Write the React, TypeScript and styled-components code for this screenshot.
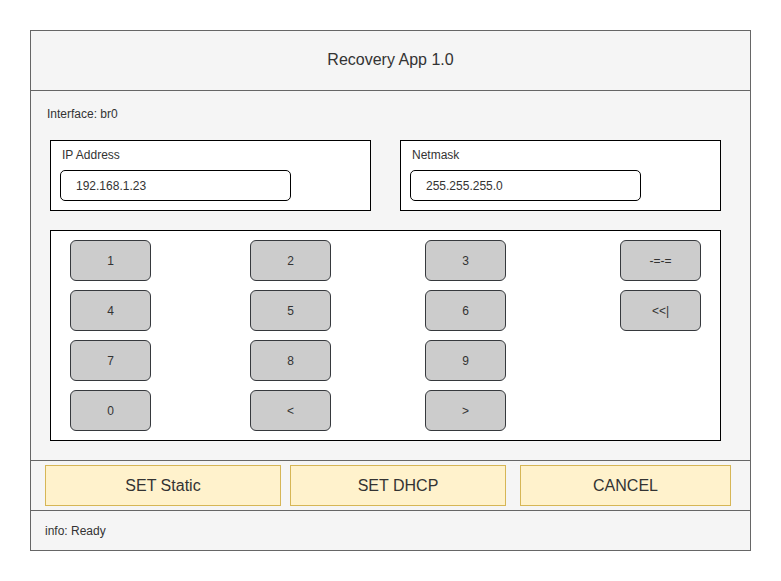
import React from "react";
import styled, { createGlobalStyle } from "styled-components";

const Global = createGlobalStyle`
  html, body { margin: 0; padding: 0; background: #ffffff; }
  body { font-family: "Liberation Sans", Arial, sans-serif; color: #333333; }
  * { box-sizing: border-box; }
`;

const Page = styled.div`
  padding: 30px 0 0 30px;
`;

const Frame = styled.div`
  width: 721px;
  height: 521px;
  border: 1px solid #666666;
  background: #f5f5f5;
  display: flex;
  flex-direction: column;
`;

const Header = styled.div`
  height: 60px;
  border-bottom: 1px solid #666666;
  display: flex;
  align-items: center;
  justify-content: center;
  font-size: 16px;
  color: #333333;
  padding-bottom: 1px;
`;

const Body = styled.div`
  height: 370px;
  border-bottom: 1px solid #666666;
  display: flex;
  flex-direction: column;
  padding: 16px 0 0 0;
`;

const InterfaceLabel = styled.div`
  font-size: 12px;
  line-height: 14px;
  height: 14px;
  margin-left: 16px;
  color: #333333;
`;

const FieldsRow = styled.div`
  display: flex;
  gap: 29px;
  margin: 19px 0 0 19px;
`;

const FieldBox = styled.div`
  width: 321px;
  height: 71px;
  border: 1px solid #000000;
  background: #ffffff;
  display: flex;
  flex-direction: column;
  padding: 7px 0 0 9px;
`;

const FieldLabel = styled.div`
  font-size: 12px;
  line-height: 14px;
  margin-left: 2px;
  color: #333333;
`;

const FieldInput = styled.div`
  width: 231px;
  height: 31px;
  margin-top: 8px;
  border: 1px solid #000000;
  border-radius: 5px;
  background: #ffffff;
  display: flex;
  align-items: center;
  padding-left: 15px;
  font-size: 12px;
  color: #333333;
`;

const Keypad = styled.div`
  width: 671px;
  height: 211px;
  margin: 19px 0 0 19px;
  border: 1px solid #000000;
  background: #ffffff;
  padding: 9px 0 0 19px;
  display: grid;
  grid-template-columns: 180px 175px 195px 81px;
  grid-auto-rows: 41px;
  row-gap: 9px;
`;

const Key = styled.div<{ $col: number; $row: number }>`
  grid-column: ${(p) => p.$col};
  grid-row: ${(p) => p.$row};
  width: 81px;
  height: 41px;
  border: 1px solid #36393d;
  border-radius: 6px;
  background: #cccccc;
  display: flex;
  align-items: center;
  justify-content: center;
  font-size: 12px;
  color: #333333;
`;

const ActionBar = styled.div`
  height: 50px;
  border-bottom: 1px solid #666666;
  display: flex;
  align-items: flex-start;
  padding: 4px 0 0 14px;
`;

const ActionButton = styled.div<{ $w: number; $ml: number }>`
  width: ${(p) => p.$w}px;
  margin-left: ${(p) => p.$ml}px;
  height: 41px;
  border: 1px solid #d6b656;
  background: #fff2cc;
  display: flex;
  align-items: center;
  justify-content: center;
  font-size: 16px;
  color: #333333;
`;

const Footer = styled.div`
  flex: 1;
  display: flex;
  align-items: center;
  padding-left: 14px;
  font-size: 12px;
  color: #333333;
`;

const keys: { label: string; col: number; row: number }[] = [
  { label: "1", col: 1, row: 1 },
  { label: "2", col: 2, row: 1 },
  { label: "3", col: 3, row: 1 },
  { label: "-=-=", col: 4, row: 1 },
  { label: "4", col: 1, row: 2 },
  { label: "5", col: 2, row: 2 },
  { label: "6", col: 3, row: 2 },
  { label: "<<|", col: 4, row: 2 },
  { label: "7", col: 1, row: 3 },
  { label: "8", col: 2, row: 3 },
  { label: "9", col: 3, row: 3 },
  { label: "0", col: 1, row: 4 },
  { label: "<", col: 2, row: 4 },
  { label: ">", col: 3, row: 4 },
];

export default function App() {
  return (
    <>
      <Global />
      <Page>
        <Frame>
          <Header>Recovery App 1.0</Header>
          <Body>
            <InterfaceLabel>Interface: br0</InterfaceLabel>
            <FieldsRow>
              <FieldBox>
                <FieldLabel>IP Address</FieldLabel>
                <FieldInput>192.168.1.23</FieldInput>
              </FieldBox>
              <FieldBox>
                <FieldLabel>Netmask</FieldLabel>
                <FieldInput>255.255.255.0</FieldInput>
              </FieldBox>
            </FieldsRow>
            <Keypad>
              {keys.map((k) => (
                <Key key={k.label} $col={k.col} $row={k.row}>
                  {k.label}
                </Key>
              ))}
            </Keypad>
          </Body>
          <ActionBar>
            <ActionButton $w={236} $ml={0}>SET Static</ActionButton>
            <ActionButton $w={216} $ml={9}>SET DHCP</ActionButton>
            <ActionButton $w={211} $ml={14}>CANCEL</ActionButton>
          </ActionBar>
          <Footer>info: Ready</Footer>
        </Frame>
      </Page>
    </>
  );
}
